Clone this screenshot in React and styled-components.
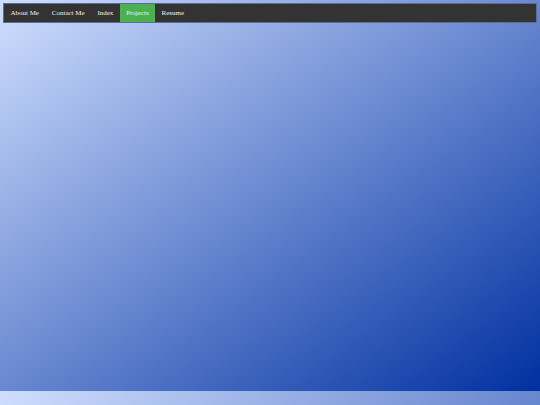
import React from "react"
import styled, { createGlobalStyle } from "styled-components"

const GlobalStyle = createGlobalStyle`
  html {
    min-height: 100%;
    background: linear-gradient(to bottom right, #d0dfff, #0030a0);
    background-size: 100% 391px;
    background-repeat: repeat-y;
  }
  body {
    margin: 0;
    font-family: "Liberation Serif", "Times New Roman", serif;
  }
`

const NavBar = styled.ul`
  display: flex;
  list-style: none;
  margin: 3px 3px 0;
  padding: 0;
  height: 20px;
  box-sizing: border-box;
  background: #333;
  border: 1px solid #5d6c94;
  overflow: hidden;
`

const NavItem = styled.li`
  display: flex;
`

const NavLink = styled.a`
  display: flex;
  align-items: center;
  padding: 0 6.4px;
  color: #f2f2f2;
  font-size: 7px;
  text-decoration: none;
  background: ${({ active }) => (active ? "#4caf50" : "transparent")};
`

const links = ["About Me", "Contact Me", "Index", "Projects", "Resume"]

const App = () => (
  <>
    <GlobalStyle />
    <NavBar>
      {links.map((label) => (
        <NavItem key={label}>
          <NavLink href="#" active={label === "Projects" ? 1 : 0}>
            {label}
          </NavLink>
        </NavItem>
      ))}
    </NavBar>
  </>
)

export default App
